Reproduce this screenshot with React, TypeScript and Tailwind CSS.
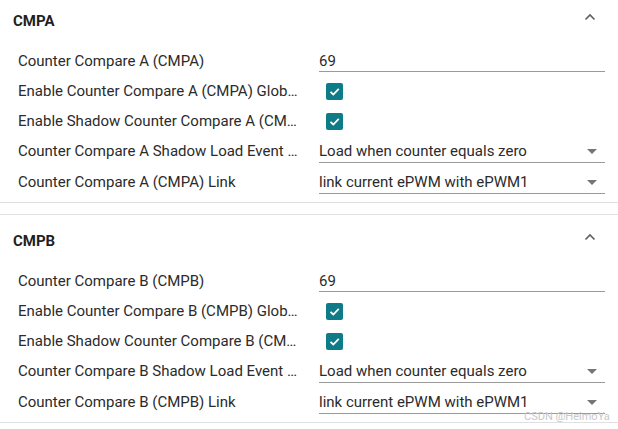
import React from "react";

const Chevron = () => (
  <svg width="12" height="8" viewBox="0 0 12 8" className="text-[#5f5f5f]">
    <path d="M1.5 6.5 L6 2 L10.5 6.5" fill="none" stroke="currentColor" strokeWidth="1.6" />
  </svg>
);

const Check = () => (
  <div className="w-[17px] h-[17px] rounded-[2px] bg-[#0e7c88] flex items-center justify-center">
    <svg width="13" height="13" viewBox="0 0 13 13">
      <path d="M2.5 6.8 L5.3 9.5 L10.8 3.8" fill="none" stroke="white" strokeWidth="1.8" />
    </svg>
  </div>
);

const Arrow = () => (
  <svg width="10" height="5" viewBox="0 0 10 5" className="text-[#757575]">
    <path d="M0 0 L10 0 L5 5 Z" fill="currentColor" />
  </svg>
);

type Row =
  | { kind: "input"; label: string; value: string }
  | { kind: "check"; label: string }
  | { kind: "select"; label: string; value: string };

const Label = ({ text }: { text: string }) => (
  <div className="w-[303px] shrink-0 pl-[18px] truncate text-[#2b2b2b]">{text}</div>
);

const RowView = ({ row, h }: { row: Row; h: string }) => {
  if (row.kind === "check") {
    return (
      <div className={`flex items-center ${h}`}>
        <Label text={row.label} />
        <div className="pl-[23px]">
          <Check />
        </div>
      </div>
    );
  }
  return (
    <div className={`flex items-center ${h}`}>
      <Label text={row.label} />
      <div className="ml-[16px] w-[286px] relative h-full flex items-center">
        <span className="text-[#2b2b2b]">{row.value}</span>
        {row.kind === "select" && (
          <span className="absolute right-[8px] top-[13px]">
            <Arrow />
          </span>
        )}
        <div className="absolute left-0 right-0 bottom-[4px] h-px bg-[#9a9a9a]" />
      </div>
    </div>
  );
};

const Section = ({ title, rows, cls }: { title: string; rows: Row[]; cls: string }) => (
  <div className={`border-t border-b border-[#e0e0e0] ${cls}`}>
    <div className="flex items-center justify-between pt-[16px] pl-[13px] pr-[22px] h-[36px]">
      <div className="font-bold text-[#1f1f1f] leading-5">{title}</div>
      <div className="-mt-[8px]">
        <Chevron />
      </div>
    </div>
    <div className="pt-[15px] pb-[4px]">
      {rows.map((r, i) => (
        <RowView
          key={i}
          row={r}
          h={["h-[30px]", "h-[30px]", "h-[30px]", "h-[31px]", "h-[31px]"][i]}
        />
      ))}
    </div>
  </div>
);

export default function App() {
  const mk = (L: string): Row[] => [
    { kind: "input", label: `Counter Compare ${L} (CMP${L})`, value: "69" },
    { kind: "check", label: `Enable Counter Compare ${L} (CMP${L}) Global Load` },
    { kind: "check", label: `Enable Shadow Counter Compare ${L} (CMP${L})` },
    { kind: "select", label: `Counter Compare ${L} Shadow Load Event Selection`, value: "Load when counter equals zero" },
    { kind: "select", label: `Counter Compare ${L} (CMP${L}) Link`, value: "link current ePWM with ePWM1" },
  ];
  return (
    <div
      className="w-[618px] h-[429px] overflow-hidden bg-white text-[15px] relative"
      style={{ fontFamily: "Roboto, 'Liberation Sans', sans-serif" }}
    >
      <div className="-mt-[6px]">
        <Section title="CMPA" rows={mk("A")} cls="" />
        <Section title="CMPB" rows={mk("B")} cls="mt-[11px]" />
      </div>
      <div className="absolute left-[524px] top-[409px] text-[11px] text-[#c8c8c8]">CSDN @HeimoYa</div>
    </div>
  );
}
